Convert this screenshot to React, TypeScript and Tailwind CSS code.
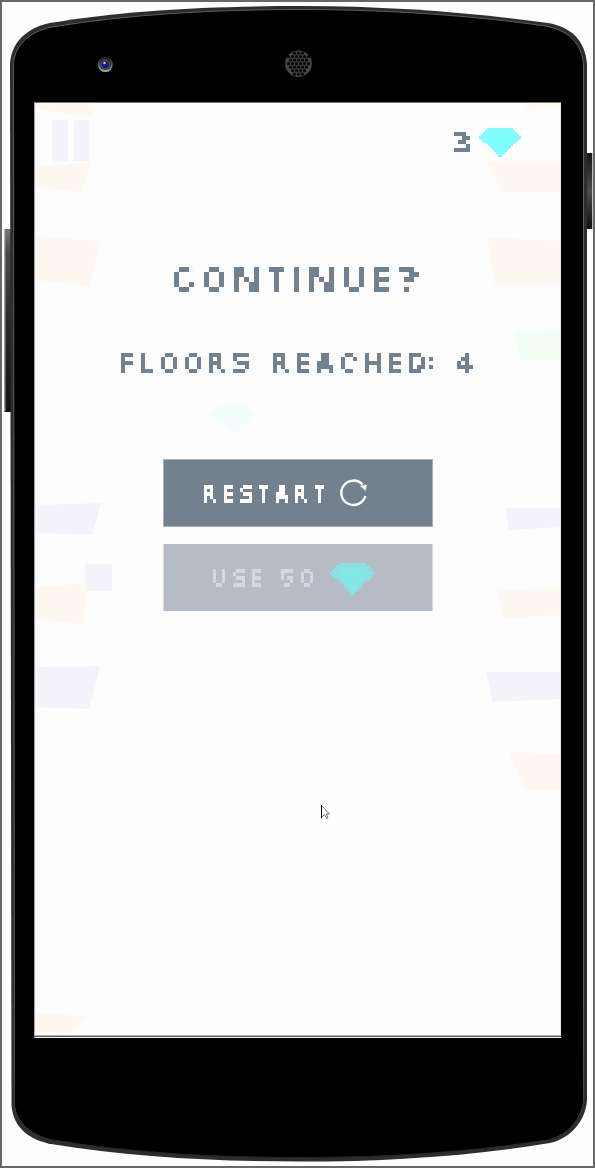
import { useLayoutEffect, useRef, useState } from "react";

const ALT = "C5";
const fontOf = (ch: string) => (ALT.includes(ch) ? 'bold 34px "Liberation Sans"' : 'bold 34px "DejaVu Sans"');

/* Widths of the glyphs in cells; everything else is four cells wide. */
const CELLS: Record<string, number> = { N: 5, T: 3, E: 3, F: 3, L: 3, I: 1, ":": 1, " ": 2 };
const cellsOf = (ch: string) => CELLS[ch] ?? 4;

type Size = "lg" | "md" | "sm";

/* cell: drawn cell width, pitch: advance per cell, height: cap height, nudge: centres the sample point */
const SIZES: Record<Size, { cell: number; pitch: number; height: number; nudge: number; row: string; filter: string }> = {
  lg: { cell: 5, pitch: 5, height: 25, nudge: 0, row: "h-[25px]", filter: "h-[25px] [filter:url(#pixels-lg)]" },
  md: { cell: 4, pitch: 4, height: 20, nudge: 0.5, row: "h-[20px]", filter: "h-[20px] [filter:url(#pixels-md)]" },
  sm: { cell: 3, pitch: 3.25, height: 17, nudge: 0, row: "h-[17px]", filter: "h-[17px] [filter:url(#pixels-sm)]" },
};

type Fit = { x: number; y: number; sx: number; sy: number };

function fitGlyph(ctx: CanvasRenderingContext2D, ch: string, size: Size): Fit {
  const { cell, height, nudge } = SIZES[size];
  ctx.font = fontOf(ch);
  const m = ctx.measureText(ch);
  const left = -m.actualBoundingBoxLeft;
  const inkW = m.actualBoundingBoxRight - left;
  const inkH = m.actualBoundingBoxAscent + m.actualBoundingBoxDescent;
  const top = Math.round(m.fontBoundingBoxAscent) - m.actualBoundingBoxAscent;
  const colon = ch === ":";
  const width = cellsOf(ch) * cell;
  const stretch = ch === "A" ? 1.2 : 1;
  const sx = (width * stretch) / inkW;
  const sy = (colon ? height * 0.6 : height) / inkH;
  return {
    x: -left * sx + nudge - (width * (stretch - 1)) / 2,
    y: (colon ? height * 0.2 : 0) - top * sy + nudge,
    sx,
    sy,
  };
}

function PixelText({ text, size, className = "" }: { text: string; size: Size; className?: string }) {
  const [fits, setFits] = useState<Fit[]>([]);
  const done = useRef(false);
  useLayoutEffect(() => {
    if (done.current) return;
    done.current = true;
    const ctx = document.createElement("canvas").getContext("2d");
    if (!ctx) return;
    setFits([...text].map((ch) => (ch === " " ? { x: 0, y: 0, sx: 1, sy: 1 } : fitGlyph(ctx, ch, size))));
  }, [text, size]);

  const s = SIZES[size];
  let pos = 0;
  return (
    <span className={`flex w-max whitespace-pre text-[34px] leading-[normal] font-bold ${s.row} ${className}`}>
      {[...text].map((ch, i) => {
        const f = fits[i];
        const face = ALT.includes(ch) ? "font-['Liberation_Sans',sans-serif]" : "font-['DejaVu_Sans',sans-serif]";
        const start = Math.round(pos * s.pitch);
        pos += cellsOf(ch) + (ch === "D" && text[i + 1] === ":" ? 1 : 2);
        const width = cellsOf(ch) * s.cell;
        const gap = Math.round(pos * s.pitch) - start - width;
        return (
          <span key={i} className={`block shrink-0 ${s.filter}`} style={{ width, marginRight: gap }}>
            <span
              className={`block w-max origin-top-left ${face}`}
              style={f ? { transform: `translate(${f.x}px, ${f.y}px) scale(${f.sx}, ${f.sy})` } : undefined}
            >
              {ch}
            </span>
          </span>
        );
      })}
    </span>
  );
}

function PixelFilters() {
  return (
    <svg className="absolute size-0" aria-hidden="true">
      <filter id="pixels-lg" x="0" y="0" width="1" height="1" colorInterpolationFilters="sRGB">
        <feGaussianBlur in="SourceGraphic" stdDeviation="0.8" result="soft" />
        <feFlood x="2" y="2" width="1" height="1" floodColor="#000" result="dot" />
        <feOffset in="dot" dx="0" dy="0" x="0" y="0" width="5" height="5" />
        <feTile result="grid" />
        <feComposite in="soft" in2="grid" operator="in" />
        <feMorphology operator="dilate" radius="2" />
        <feComponentTransfer>
          <feFuncA type="linear" slope="100" intercept="-58" />
        </feComponentTransfer>
      </filter>
      <filter id="pixels-md" x="0" y="0" width="1" height="1" colorInterpolationFilters="sRGB">
        <feGaussianBlur in="SourceGraphic" stdDeviation="0.6" result="soft" />
        <feFlood x="2" y="2" width="1" height="1" floodColor="#000" result="dot" />
        <feOffset in="dot" dx="0" dy="0" x="0" y="0" width="4" height="4" />
        <feTile result="grid" />
        <feComposite in="soft" in2="grid" operator="in" />
        <feMorphology operator="dilate" radius="1" />
        <feComponentTransfer result="a">
          <feFuncA type="linear" slope="100" intercept="-58" />
        </feComponentTransfer>
        <feOffset in="a" dx="-1" dy="0" result="b" />
        <feMerge result="wide">
          <feMergeNode in="a" />
          <feMergeNode in="b" />
        </feMerge>
        <feOffset in="wide" dx="0" dy="-1" result="up" />
        <feMerge>
          <feMergeNode in="wide" />
          <feMergeNode in="up" />
        </feMerge>
      </filter>
      <filter id="pixels-sm" x="0" y="0" width="1" height="1" colorInterpolationFilters="sRGB">
        <feGaussianBlur in="SourceGraphic" stdDeviation="0.4" result="soft" />
        <feFlood x="1" y="1" width="1" height="1" floodColor="#000" result="r0" />
        <feFlood x="1" y="4" width="1" height="1" floodColor="#000" result="r1" />
        <feFlood x="1" y="8" width="1" height="1" floodColor="#000" result="r2" />
        <feFlood x="1" y="11" width="1" height="1" floodColor="#000" result="r3" />
        <feFlood x="1" y="15" width="1" height="1" floodColor="#000" result="r4" />
        <feMerge x="0" y="0" width="3" height="17">
          <feMergeNode in="r0" />
          <feMergeNode in="r1" />
          <feMergeNode in="r2" />
          <feMergeNode in="r3" />
          <feMergeNode in="r4" />
        </feMerge>
        <feTile result="grid" />
        <feComposite in="soft" in2="grid" operator="in" />
        <feMorphology operator="dilate" radius="1" />
        <feComponentTransfer result="a">
          <feFuncA type="linear" slope="100" intercept="-56" />
        </feComponentTransfer>
        <feOffset in="a" dx="0" dy="1" result="b" />
        <feMerge>
          <feMergeNode in="a" />
          <feMergeNode in="b" />
        </feMerge>
      </filter>
    </svg>
  );
}

function Gem({ className, edge }: { className: string; edge?: string }) {
  return (
    <svg viewBox="0 0 42 30" preserveAspectRatio="none" shapeRendering="crispEdges" className={className}>
      <path
        fill={edge ?? "currentColor"}
        d="M8 0H34V2H36V4H38V6H40V8H42V11H40V13H38V15H36V17H34V19H32V21H30V23H28V25H26V27H23V30H19V27H17V25H15V23H13V21H11V19H9V17H7V15H4V13H2V11H0V8H2V6H4V4H6V2H8Z"
      />
      {edge && <path fill="currentColor" d="M10 4H32V6H35V8H37V11H35V13H33V15H31V17H29V19H27V21H25V23H23V26H19V23H17V21H15V19H13V17H11V15H9V13H7V11H5V8H7V6H10Z" />}
    </svg>
  );
}

const MESH_ROWS = [-10, -6.5, -3, 0.5, 4, 7.5, 11];
const MESH_COLS = [-12, -8, -4, 0, 4, 8];

function PhoneBody() {
  return (
    <svg viewBox="0 0 595 1168" className="absolute inset-0 size-full" aria-hidden="true">
      <defs>
        <linearGradient id="leftKey" x1="0" y1="0" x2="0" y2="1">
          <stop offset="0" stopColor="#777" />
          <stop offset=".12" stopColor="#48494b" />
          <stop offset=".5" stopColor="#292a2d" />
          <stop offset="1" stopColor="#111" />
        </linearGradient>
        <linearGradient id="rightKey" x1="0" y1="0" x2="0" y2="1">
          <stop offset="0" stopColor="#161616" />
          <stop offset=".5" stopColor="#4b4b4b" />
          <stop offset="1" stopColor="#101010" />
        </linearGradient>
        <linearGradient id="rim" x1="0" y1="0" x2="0" y2="1">
          <stop offset="0" stopColor="#5c5c5c" />
          <stop offset=".9" stopColor="#56585a" />
          <stop offset="1" stopColor="#242424" />
        </linearGradient>
        <linearGradient id="lens" x1="0" y1="0" x2="0" y2="1">
          <stop offset="0" stopColor="#222" />
          <stop offset="1" stopColor="#aaa" />
        </linearGradient>
      </defs>
      <rect x="4.500" y="229" width="7" height="183" fill="url(#leftKey)" />
      <path d="M5 229V411" stroke="#999" strokeWidth="1" />
      <rect x="586" y="153" width="6.300" height="76" fill="url(#rightKey)" />
      <path
        d="M10 64C11 43 26 28 50 23C125 10 216 6 300 6C390 6 477 13 548 23C571 27 585 40 587 64V1100C586 1119 572 1138 550 1143C470 1156 390 1161.500 300 1161.500C215 1161.500 130 1157 51 1144C30 1140 13 1128 11.500 1105Z"
        fill="#2d2d2e"
      />
      <path
        d="M13.500 65C14 46 28 32 52 27C130 14 216 9.500 300 9.500C390 9.500 477 16 545 26C568 30 582 43 583.500 65V1100C582 1118 569 1135 548 1140C470 1152 390 1157.500 300 1157.500C215 1157.500 130 1153 53 1140C33 1136 16 1124 14.500 1104Z"
        fill="#000"
        stroke="url(#rim)"
        strokeWidth="1"
      />
      <path
        d="M15.500 66C16 48 29 34 53 29C130 16 216 11.500 300 11.500C390 11.500 477 18 544 28C566 32 580 45 581.500 66V1099C580 1116 567 1133 546 1138C470 1150 390 1155.500 300 1155.500C215 1155.500 130 1151 55 1138C35 1134 18 1122 16.500 1103Z"
        fill="#000"
      />
      <circle cx="105.300" cy="64.600" r="7.500" fill="url(#lens)" />
      <circle cx="105.300" cy="64" r="6" fill="#1c1c1c" />
      <circle cx="105.300" cy="64.500" r="4.500" fill="#24243a" stroke="#777" strokeWidth=".8" />
      <circle cx="105" cy="65" r="2.800" fill="#1515a8" />
      <circle cx="104.500" cy="63" r="1.200" fill="#c8c8ef" />
      <circle cx="298.500" cy="63.700" r="13.300" fill="#484848" />
      {MESH_ROWS.map((y, r) =>
        MESH_COLS.map((x) => {
          const cx = x + (r % 2 ? 2 : 0);
          return cx * cx + y * y < 150 ? (
            <circle key={`${x}:${y}`} cx={298.5 + cx} cy={63.2 + y} r="1.600" fill="#060606" />
          ) : null;
        }),
      )}
    </svg>
  );
}

function Scenery() {
  return (
    <svg viewBox="34 102 527 936" className="absolute inset-0 size-full" aria-hidden="true">
      <g fill="#fdf9f2">
        <path d="M35 103H93L91 117L35 109ZM35 167L92 162L81 192L35 187ZM35 236L101 241L89 286L35 280ZM35 587L88 583L83 624L35 619ZM35 1013L86 1016L71 1032L35 1035Z" />
        <path d="M526 103H561V107L527 109ZM487 161H561V192L502 193ZM487 237L561 241V285H495ZM498 590L561 588V615L502 619ZM509 752L561 754V789L525 790Z" />
      </g>
      <path fill="#f5fef6" d="M513 331L561 329V361H521Z" />
      <g fill="#f4f3f9">
        <path d="M37 505L101 503L92 535L37 533ZM37 667L100 666L89 709L37 707ZM85 564H112V591H87V583H85ZM505 508H561V527L509 530ZM486 672H561V699L493 702Z" />
        <path d="M52 120H68V161H52ZM74 120H89V161H74Z" />
      </g>
      <path d="M34.500 102V1038" stroke="#a5a5aa" />
      <path d="M35.500 103V1035" stroke="#f0f0f6" />
      <path d="M34 102.500H561" stroke="#777" />
      <path d="M560.500 103V1038" stroke="#e6e6e6" />
      <path d="M34 1035.500H561" stroke="#b3b3b3" />
      <path d="M34 1036.500H561" stroke="#555" />
    </svg>
  );
}

export default function App() {
  return (
    <main className="relative flex h-[1168px] w-[595px] flex-col overflow-hidden bg-[#fdfdfd] pt-[102px] pl-[34px]">
      <PixelFilters />
      <PhoneBody />
      <section className="relative flex h-[936px] w-[527px] flex-col items-start bg-[#fdfdfd] pl-px">
        <Scenery />
        <header className="relative flex h-[165px] w-full pt-[30px] pl-[419px]">
          <div className="h-5 w-[25px]">
            <PixelText text="3" size="md" className="text-[#73818f]" />
          </div>
          <Gem className="-mt-[4px] h-[29px] w-[42px] text-[#7ffdfd]" />
        </header>
        <h1 className="relative ml-[139px] h-[85px]">
          <PixelText text="CONTINUE?" size="lg" className="text-[#73818f]" />
        </h1>
        <p className="relative ml-[86px] h-[51px] w-[360px] pt-[1px]">
          <PixelText text="FLOORS REACHED: 4" size="md" className="text-[#73818f]" />
        </p>
        <Gem className="relative mt-[2px] ml-[177px] h-[29px] w-[42px] text-[#f3fefc]" />
        <div className="relative mt-[25px] ml-[128px] flex w-[270px] flex-col gap-[17px]">
          <button className="flex h-[68px] w-full border border-[#a8b0b8] bg-[#73818f] pt-[25px] pl-[40px]">
            <span className="block h-4 w-[134px]">
              <PixelText text="RESTART" size="sm" className="text-white" />
            </span>
            <svg viewBox="0 0 30 30" className="-mt-[7px] ml-px size-[30px] fill-none stroke-white">
              <path d="M26.300 18A12.200 12.200 0 1 1 23.500 6.500" strokeWidth="2.400" />
              <path d="M21.500 8L27.500 7L26.500 12.500Z" strokeWidth=".5" fill="#fff" />
            </svg>
          </button>
          <button className="flex h-[67px] w-full border-x border-[#d8dce0] bg-[#b5bcc5] pt-[25px] pl-[49px]">
            <span className="block h-4 w-[117px]">
              <PixelText text="USE 50" size="sm" className="text-[#d5d9de]" />
            </span>
            <Gem className="-mt-[6px] h-[32px] w-[45px] text-[#83e9e8]" edge="#90dde1" />
          </button>
        </div>
        <svg viewBox="0 0 10 15" className="absolute top-[703px] left-[287px] h-[15px] w-[10px]" aria-hidden="true">
          <path d="M.5 .5L8.500 9H5.500L7 13L5.500 13.500L3.500 9.500L.5 12.500Z" fill="#fff" stroke="#555" strokeWidth=".8" />
          <path d="M.5 0V13" stroke="#000" />
        </svg>
      </section>
      <div className="pointer-events-none absolute inset-0 border-2 border-[#686868]" />
    </main>
  );
}
